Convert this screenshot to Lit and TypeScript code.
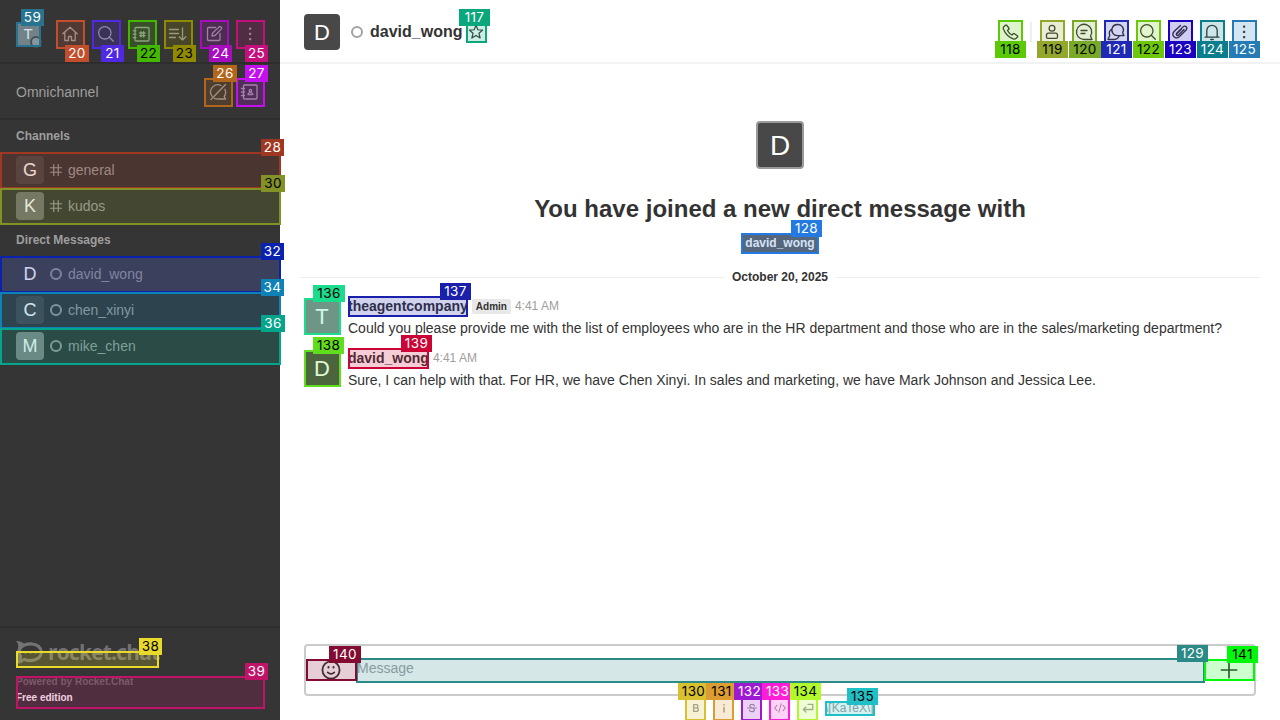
import { LitElement, html, svg, css, nothing } from "lit";
import { customElement, property } from "lit/decorators.js";

const ICONS: Record<string, unknown> = {
  home: svg`<path d="M2.800 9.800 10 3.200l7.200 6.600M4.800 8.500V16.500h3.700v-4h3v4h3.700V8.500"/>`,
  search: svg`<circle cx="8.800" cy="8.800" r="6.200"/><path d="m13.300 13.300 4 4"/>`,
  directory: svg`<rect x="3" y="3.500" width="14" height="13.500" rx="1"/><path d="M1.200 6.800h2.800M1.200 10.200h2.800M1.200 13.700h2.800M9 7.700v5.200M11.600 7.700v5.200M7.600 9h5.400M7.600 11.600h5.400"/>`,
  sort: svg`<path d="M1.500 5.500h9M1.500 9.500h9M1.500 13.500h6M14.500 4v12M11.200 12.800l3.300 3.300 3.300-3.300"/>`,
  edit: svg`<path d="M11.500 3.500H4.500Q3.500 3.500 3.500 4.500v11q0 1 1 1H15q1 0 1-1V9.500M8 12l.6-3 6.700-6.300q.6-.5 1.200 0l1 1q.5.600 0 1.200L11 11.500z"/>`,
  kebab: svg`<g fill="currentColor" stroke="none"><rect x="9" y="3.500" width="2.200" height="2.200" rx=".6"/><rect x="9" y="8.800" width="2.200" height="2.200" rx=".6"/><rect x="9" y="14" width="2.200" height="2.200" rx=".6"/></g>`,
  omniOff: svg`<path d="M13 3.500a7.200 7.200 0 0 0-9 10.700M6.500 16.300q2 .9 4.500.7h6.500l-1.300-2.500a7.200 7.200 0 0 0 .7-7.200M3 17.500 17.500 2.500"/>`,
  contacts: svg`<rect x="3.500" y="3" width="13.500" height="14" rx="1"/><path d="M1.500 6.500h3M1.500 10h3M1.500 13.500h3"/><circle cx="10.400" cy="8.500" r="1.200"/><path d="M8 12.600q0-2 2.400-2t2.400 2z"/>`,
  hash: svg`<path stroke-width="1.500" d="M7.200 3.200v13.600M12.800 3.200v13.600M3 7.200h14M3 12.800h14"/>`,
  star: svg`<path stroke-width="1.500" d="m10 1.700 2.300 5.500 6 .5-4.600 3.900 1.500 5.900-5.200-3.200-5.200 3.200 1.500-5.900L1.700 7.700l6-.5z"/>`,
  phone: svg`<path d="M1.800 4.700 3.500 3.200q.7-.5 1.300.2L6.800 6q.5.700-.1 1.300L5.500 8.500q1.500 3 4.500 4.500l1.200-1.200q.6-.6 1.300-.1l2.800 2q.7.600.2 1.300l-1.700 1.600q-1 .8-2.600.2Q4.500 14.500 1.500 7.300q-.5-1.600.3-2.600z"/>`,
  user: svg`<circle cx="10" cy="6.200" r="2.900"/><path d="M6.500 11.200h7q2 0 2 2v1.800q0 1.300-1.300 1.300H5.800q-1.300 0-1.300-1.300v-1.800q0-2 2-2z"/>`,
  thread: svg`<path d="M10.200 17.500H18L16.500 14A7.600 7.600 0 1 0 10.200 17.500zM7 8.500h6M7 11.500h4"/>`,
  discussion: svg`<path d="M11.500 2.500a5.500 5.500 0 0 0-4.600 8.800q1.500 2.200 4.600 2.300h6.500l-1.400-2.700A5.500 5.500 0 0 0 11.500 2.500zM5.500 7.300a5 5 0 0 0-1.700 6L2 17.500H8.500q3.300 0 4.800-3.700"/>`,
  clip: svg`<path d="m14 7.500-5.500 5.500q-1.100.9-1.900.1t.1-1.900L13 4.900q1.800-1.500 3.200-.1t-.1 3.200L9.500 14.500q-3 2.700-5.500.3t.3-5.500L10.500 3.500M11.500 7 7 11.500"/>`,
  bell: svg`<path d="M3 15.200h14M4.800 15V8.500a5.200 5.200 0 0 1 10.400 0V15M8.700 17.500h2.600"/>`,
  smile: svg`<circle cx="10" cy="10" r="7.800" stroke-width="1.600"/><path stroke-width="1.600" d="M7 12.200q3 2.600 6 0"/><path stroke-width="1.800" d="M7.700 7.200v.6M12.300 7.200v.6"/>`,
  plus: svg`<path d="M10 3v14M3 10h14" stroke-width="1.500"/>`,
  bold: svg`<path stroke-width="2.200" d="M6 4.500h4.700q2.500 0 2.500 2.600t-2.500 2.600H6zM6 9.700h5.200q2.700 0 2.700 2.900t-2.700 2.900H6z"/>`,
  italic: svg`<path stroke-width="2.400" d="M10 9V16.500M10 4v1"/>`,
  strike: svg`<path stroke-width="2" d="M14 6.500Q13.500 4 10 4T6.300 6.800q0 2.200 3.700 3t4 3.400q0 2.800-4 2.800t-4.200-2.600M2.500 10h15"/>`,
  code: svg`<path stroke-width="1.800" d="m5 5.500-4 4.500 4 4.500M15 5.500l4 4.500-4 4.500M12 3 8 17"/>`,
  enter: svg`<path stroke-width="2.200" d="M10 4h8v8.500H2.500M6.500 8.300 2.200 12.500l4.300 4.200"/>`,
};

@customElement("ui-icon")
class UiIcon extends LitElement {
  static styles = css`
    :host { display: block; flex: none; width: 20px; height: 20px; }
    :host([size="16"]) { width: 16px; height: 16px; }
    :host([size="12"]) { width: 12px; height: 12px; }
    :host([size="24"]) { width: 22px; height: 22px; }
    svg { display: block; width: 100%; height: 100%; fill: none; stroke: currentColor; stroke-width: 1.3; stroke-linejoin: round; stroke-linecap: round; }
  `;
  @property() name = "";
  render() {
    return html`<svg viewBox="0 0 20 20">${ICONS[this.name] ?? nothing}</svg>`;
  }
}

@customElement("side-bar")
class SideBar extends LitElement {
  static styles = css`
    :host { display: flex; flex-direction: column; width: 280px; flex: none; background: #353535; color: #9e9e9e; }
    .top { display: flex; align-items: center; box-sizing: border-box; height: 64px; padding: 6px 15px 0 16px; border-bottom: 2px solid #2d2d2d; }
    .me { position: relative; width: 24px; height: 24px; line-height: 24px; border-radius: 3px; background: #868686; color: #fff; text-align: center; font-size: 15px; }
    .dot { position: absolute; right: -2px; bottom: -2px; box-sizing: border-box; width: 12px; height: 12px; border: 2px solid #4a4a4a; border-radius: 50%; background: #a0a0a0; }
    .tools { display: flex; gap: 16px; margin-left: auto; padding-right: 5px; }
    .omni { display: flex; align-items: center; box-sizing: border-box; height: 56px; padding: 2px 20px 0 16px; border-bottom: 2px solid #2d2d2d; font-size: 14px; gap: 12px; }
    .omni span { flex: 1; }
    .title { height: 32px; line-height: 32px; padding-left: 16px; font-size: 12px; font-weight: 700; }
    .row { display: flex; align-items: center; height: 36px; padding-left: 16px; font-size: 14px; }
    .active { background: #484848; }
    .av { width: 28px; height: 28px; line-height: 28px; border-radius: 4px; color: #fff; text-align: center; font-size: 18px; margin-right: 4px; background: #484848; }
    .k { background: #727272; }
    .m { background: #848484; }
    .mark { display: flex; justify-content: center; width: 16px; margin-right: 4px; }
    .ring { box-sizing: border-box; width: 12px; height: 12px; border: 2px solid #9a9a9a; border-radius: 50%; }
    .foot { margin-top: auto; box-sizing: border-box; height: 94px; border-top: 2px solid #2d2d2d; padding: 10px 16px 0; font-size: 10px; font-weight: 700; line-height: 16px; }
    .logo { display: flex; align-items: center; height: 28px; color: #737373; font: 700 21px/28px "Open Sans", sans-serif; letter-spacing: -0.8px; }
    .logo svg { width: 27px; height: 25px; margin-right: 5px; }
    .powered { margin-top: 8px; color: #6c6c6c; }
    .edition { color: #fff; }
  `;
  render() {
    const room = (name: string, cls: string, dm: boolean, active = false) => html`
      <div class="row ${active ? "active" : ""}">
        <div class="av ${cls}">${name[0].toUpperCase()}</div>
        <div class="mark">${dm ? html`<div class="ring"></div>` : html`<ui-icon size="16" name="hash"></ui-icon>`}</div>
        <span>${name}</span>
      </div>`;
    return html`
      <div class="top">
        <div class="me">T<i class="dot"></i></div>
        <div class="tools">
          ${["home", "search", "directory", "sort", "edit", "kebab"].map((n) => html`<ui-icon name=${n}></ui-icon>`)}
        </div>
      </div>
      <div class="omni"><span>Omnichannel</span><ui-icon name="omniOff"></ui-icon><ui-icon name="contacts"></ui-icon></div>
      <div class="title">Channels</div>
      ${room("general", "g", false)} ${room("kudos", "k", false)}
      <div class="title">Direct Messages</div>
      ${room("david_wong", "d", true, true)} ${room("chen_xinyi", "c", true)} ${room("mike_chen", "m", true)}
      <div class="foot">
        <div class="logo">
          <svg viewBox="0 0 27 25">
            <path fill="currentColor" fill-rule="evenodd" d="M0 1q5-.5 8 2.500Q11 2.300 15 2.300q11 .7 12 10Q26 21.500 15 22.300q-4 0-7-1.200Q5 24.500 0 24q3-3.500 2-7.500Q0 12.300 2 8.500 3 4 0 1zM6 8.500q-2.500 3.800 0 7.500.5 1.500-.3 3.200 1.300-.4 2.300-1.400 3 1.200 7 1.200 8-.5 9-6.700-1-6.300-9-6.800-6 0-9 3z"/>
            <g fill="currentColor"><circle cx="9.500" cy="12.500" r="1.300"/><circle cx="14.500" cy="12.500" r="1.300"/><circle cx="19.500" cy="12.500" r="1.300"/></g>
          </svg>rocket.chat
        </div>
        <div class="powered">Powered by Rocket.Chat</div>
        <div class="edition">Free edition</div>
      </div>`;
  }
}

@customElement("chat-room")
class ChatRoom extends LitElement {
  static styles = css`
    :host { display: flex; flex-direction: column; flex: 1; min-width: 0; background: #fff; color: #333; }
    header { display: flex; align-items: center; box-sizing: border-box; height: 64px; padding: 2px 26px 0 24px; border-bottom: 2px solid #f2f2f2; }
    .av { width: 36px; height: 36px; line-height: 37px; border-radius: 4px; background: #484848; color: #fff; text-align: center; font-size: 22px; flex: none; }
    .av.t { background: #848484; }
    .ring { box-sizing: border-box; width: 12px; height: 12px; margin: 0 7px 0 11px; border: 2px solid #a3a3a3; border-radius: 50%; }
    .name { font-size: 16px; font-weight: 700; margin-right: 6px; }
    .tools { display: flex; align-items: center; gap: 12px; margin-left: auto; }
    .sep { width: 2px; height: 20px; margin: 0 -2px 0 -4px; background: #efefef; }
    .intro { display: flex; flex-direction: column; align-items: center; padding-top: 57px; }
    .big { box-sizing: border-box; width: 48px; height: 48px; line-height: 46px; border: 2px solid #9b9b9b; border-radius: 4px; background: #484848; color: #fff; text-align: center; font-size: 28px; }
    h1 { margin: 24px 0 0; font-size: 24px; line-height: 32px; }
    .chip { height: 20px; line-height: 18px; margin-top: 9px; padding: 0 4px; border-radius: 2px; background: #636363; color: #fff; font-size: 12px; font-weight: 700; }
    .date { display: flex; align-items: center; gap: 8px; height: 16px; margin: 15px 20px 0; font-size: 12px; font-weight: 700; }
    .date::before, .date::after { content: ""; flex: 1; height: 1px; background: #efefef; }
    .list { display: flex; flex-direction: column; padding: 9px 24px 0; }
    .msg { display: flex; gap: 8px; height: 52px; }
    .msg .av { margin-top: 4px; border-radius: 2px; line-height: 38px; }
    .head { display: flex; align-items: center; gap: 4px; height: 20px; margin-top: 2px; font-size: 14px; }
    .tag { height: 15px; line-height: 15px; padding: 0 4px; border-radius: 2px; background: #e8e8e8; font-size: 10px; font-weight: 700; }
    .time { color: #9e9e9e; font-size: 12px; }
    .text { font-size: 14px; line-height: 20px; margin-top: 2px; white-space: nowrap; }
    .spacer { flex: 1; }
    .composer { display: flex; box-sizing: border-box; height: 52px; margin: 0 24px; padding: 11px 14px 0; border: 2px solid #cbcbcb; border-radius: 4px; }
    .composer ui-icon { margin-top: 2px; }
    .input { flex: 1; padding-left: 15px; font-size: 14px; line-height: 22px; color: #9ea2a8; }
    .hints { display: flex; align-items: center; gap: 16px; height: 24px; padding-left: 410px; color: #9c9c9c; font-size: 12px; }
    .hints span { margin-left: -5px; }
  `;
  render() {
    const msg = (user: string, cls: string, tag: string, text: string) => html`
      <div class="msg">
        <div class="av ${cls}">${user[0].toUpperCase()}</div>
        <div>
          <div class="head"><b>${user}</b>${tag ? html`<span class="tag">${tag}</span>` : nothing}<span class="time">4:41 AM</span></div>
          <div class="text">${text}</div>
        </div>
      </div>`;
    return html`
      <header>
        <div class="av">D</div>
        <div class="ring"></div>
        <div class="name">david_wong</div>
        <ui-icon size="16" name="star"></ui-icon>
        <div class="tools">
          <ui-icon name="phone"></ui-icon><div class="sep"></div>
          ${["user", "thread", "discussion", "search", "clip", "bell", "kebab"].map((n) => html`<ui-icon name=${n}></ui-icon>`)}
        </div>
      </header>
      <div class="intro">
        <div class="big">D</div>
        <h1>You have joined a new direct message with</h1>
        <div class="chip">david_wong</div>
      </div>
      <div class="date">October 20, 2025</div>
      <div class="list">
        ${msg("theagentcompany", "t", "Admin", "Could you please provide me with the list of employees who are in the HR department and those who are in the sales/marketing department?")}
        ${msg("david_wong", "d", "", "Sure, I can help with that. For HR, we have Chen Xinyi. In sales and marketing, we have Mark Johnson and Jessica Lee.")}
      </div>
      <div class="spacer"></div>
      <div class="composer">
        <ui-icon size="24" name="smile"></ui-icon>
        <div class="input">Message</div>
        <ui-icon size="24" name="plus"></ui-icon>
      </div>
      <div class="hints">
        ${["bold", "italic", "strike", "code", "enter"].map((n) => html`<ui-icon size="12" name=${n}></ui-icon>`)}
        <span>\\[KaTeX\\]</span>
      </div>`;
  }
}

/* id, box x, y, width, height, label x, y, width, colour, dark label text */
type Mark = [number, number, number, number, number, number, number, number, string, number];
const MARKS: Mark[] = [
  [20, 56, 20, 29, 29, 65, 45, 24, "#c14e2c", 0],
  [21, 92, 20, 29, 29, 101, 45, 23, "#5029e3", 0],
  [22, 128, 20, 29, 29, 137, 45, 23, "#44b800", 1],
  [23, 164, 20, 29, 29, 173, 45, 23, "#8f8a00", 1],
  [24, 200, 20, 29, 29, 209, 45, 23, "#a80cc0", 0],
  [25, 236, 20, 29, 29, 245, 45, 23, "#c40f7d", 0],
  [26, 204, 78, 29, 29, 213, 65, 24, "#b2661c", 0],
  [27, 236, 78, 29, 29, 245, 65, 23, "#c40fef", 0],
  [28, 0, 152, 281, 37, 261, 139, 23, "#9f3823", 0],
  [30, 0, 188, 281, 37, 261, 175, 24, "#839126", 1],
  [32, 0, 256, 281, 37, 261, 243, 23, "#0a22ae", 0],
  [34, 0, 292, 281, 37, 261, 279, 23, "#0e82b6", 0],
  [36, 0, 328, 281, 37, 261, 315, 24, "#04a58b", 0],
  [38, 16, 651, 143, 17, 139, 638, 23, "#e8d92a", 1],
  [39, 16, 676, 249, 33, 245, 663, 23, "#bf1467", 0],
  [59, 16, 22, 25, 25, 21, 9, 23, "#28738f", 0],
  [117, 466, 22, 21, 21, 459, 9, 31, "#0ba77c", 0],
  [118, 998, 20, 25, 25, 995, 41, 31, "#5bca04", 1],
  [119, 1040, 20, 25, 25, 1037, 41, 31, "#92a72c", 1],
  [120, 1072, 20, 25, 25, 1069, 41, 32, "#79aa27", 1],
  [121, 1104, 20, 25, 25, 1101, 41, 31, "#2029b5", 0],
  [122, 1136, 20, 25, 25, 1133, 41, 31, "#6dc70b", 1],
  [123, 1168, 20, 25, 25, 1165, 41, 31, "#1a00c0", 0],
  [124, 1200, 20, 25, 25, 1197, 41, 31, "#0c7d8c", 0],
  [125, 1232, 20, 25, 25, 1229, 41, 31, "#247bb5", 0],
  [128, 741, 233, 78, 21, 791, 220, 31, "#227ae2", 0],
  [129, 356, 658, 849, 25, 1177, 645, 31, "#2b8986", 0],
  [130, 685, 696, 21, 25, 678, 683, 31, "#d9c02e", 1],
  [131, 713, 696, 21, 25, 706, 683, 31, "#dc9c32", 1],
  [132, 741, 696, 21, 25, 734, 683, 31, "#9e1ad2", 0],
  [133, 769, 696, 21, 25, 762, 683, 31, "#ff1ed8", 0],
  [134, 797, 696, 21, 25, 790, 683, 31, "#b2f92b", 1],
  [135, 825, 701, 50, 15, 847, 688, 31, "#20bfc5", 1],
  [136, 304, 298, 37, 37, 313, 285, 32, "#1bdb8d", 1],
  [137, 348, 296, 120, 21, 440, 283, 31, "#1a20aa", 0],
  [138, 304, 350, 37, 37, 313, 337, 31, "#60dd1c", 1],
  [139, 348, 348, 81, 21, 401, 335, 31, "#cb0336", 0],
  [140, 306, 659, 51, 22, 329, 646, 32, "#830b31", 0],
  [141, 1204, 659, 51, 22, 1227, 646, 31, "#00f80a", 1],
];

@customElement("mark-layer")
class MarkLayer extends LitElement {
  static styles = css`
    :host { position: absolute; inset: 0; overflow: hidden; pointer-events: none; }
    .box { position: absolute; box-sizing: border-box; border: 2px solid; }
    .box::before { content: ""; position: absolute; inset: 0; background: currentColor; opacity: 0.2; }
    .label { position: absolute; box-sizing: border-box; height: 17px; line-height: 16px; color: #fff; font-family: Inter, sans-serif; font-size: 13.5px; letter-spacing: 0.35px; text-align: center; white-space: nowrap; }
    .dark { color: #000; }
  `;
  render() {
    return html`
      ${MARKS.map(([, x, y, w, h, , , , c]) => html`<div class="box" style="left:${x}px;top:${y}px;width:${w}px;height:${h}px;color:${c}"></div>`)}
      ${MARKS.map(([id, , , , , x, y, w, c, dark]) => html`<div class="label ${dark ? "dark" : ""}" style="left:${x}px;top:${y}px;width:${w}px;background:${c}">${id}</div>`)}`;
  }
}

@customElement("app-root")
class AppRoot extends LitElement {
  static styles = css`
    :host { position: relative; display: flex; width: 1280px; height: 720px; overflow: hidden; font-family: "Liberation Sans", Arial, sans-serif; }
  `;
  render() {
    return html`<side-bar></side-bar><chat-room></chat-room><mark-layer></mark-layer>`;
  }
}
